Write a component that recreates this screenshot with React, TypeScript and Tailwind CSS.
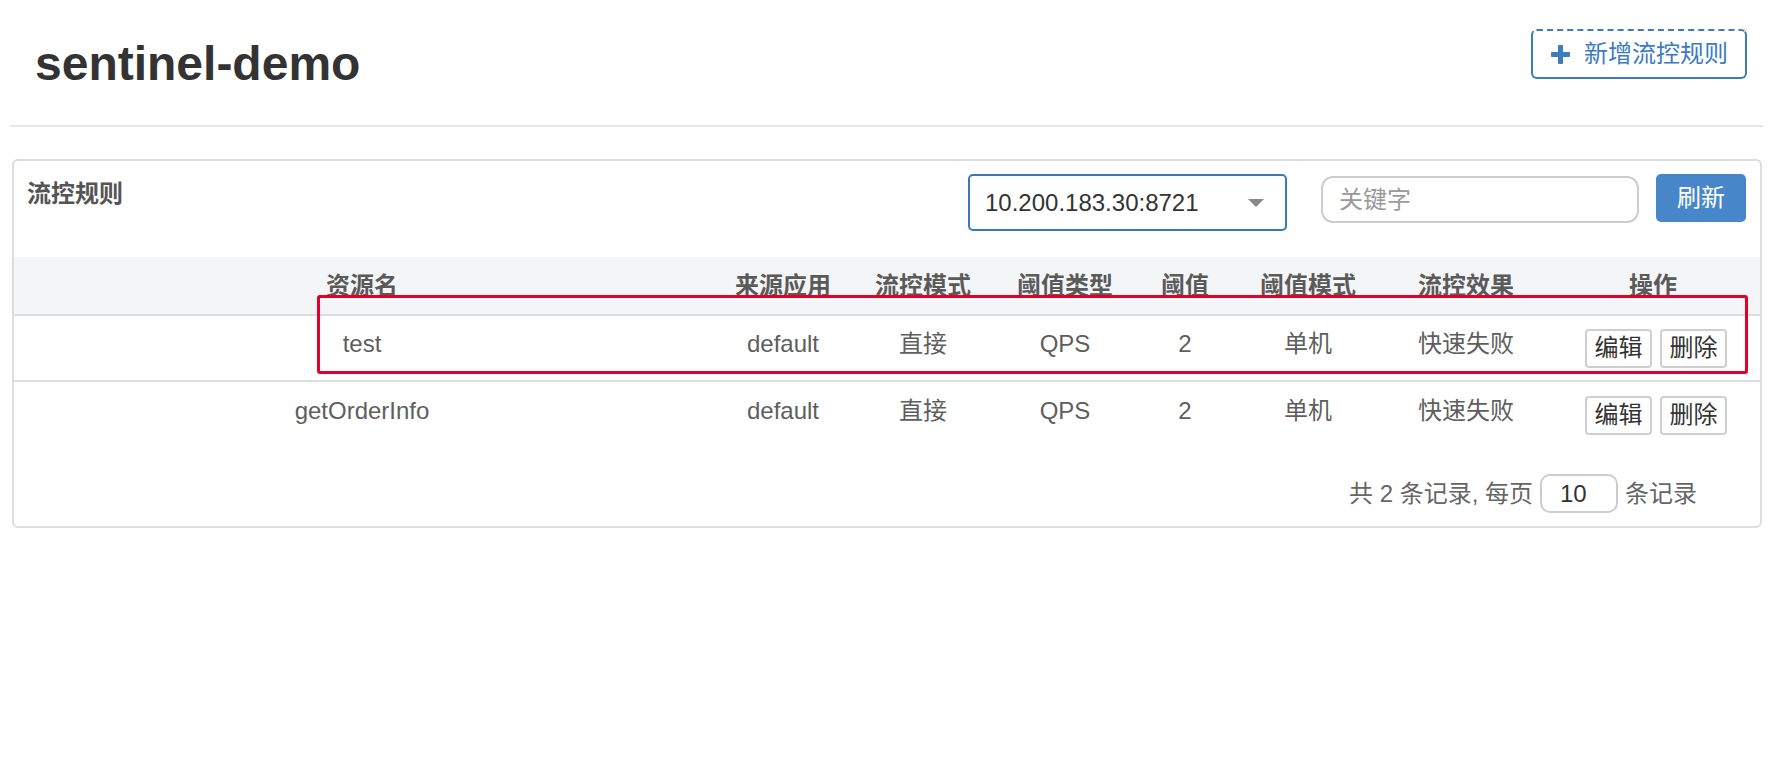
import React from "react";

const cols =
  "grid grid-cols-[696px_146px_134px_150px_90px_156px_160px_214px] items-center text-center";

interface Rule {
  resource: string;
  limitApp: string;
  strategy: string;
  grade: string;
  count: number;
  clusterMode: string;
  behavior: string;
}

const rules: Rule[] = [
  {
    resource: "test",
    limitApp: "default",
    strategy: "直接",
    grade: "QPS",
    count: 2,
    clusterMode: "单机",
    behavior: "快速失败",
  },
  {
    resource: "getOrderInfo",
    limitApp: "default",
    strategy: "直接",
    grade: "QPS",
    count: 2,
    clusterMode: "单机",
    behavior: "快速失败",
  },
];

const headers = ["资源名", "来源应用", "流控模式", "阈值类型", "阈值", "阈值模式", "流控效果", "操作"];

const PlusIcon = () => (
  <svg width="19" height="19" viewBox="0 0 19 19" fill="#3b7bbf">
    <rect x="7" y="0" width="5" height="19" rx="1" />
    <rect x="0" y="7" width="19" height="5" rx="1" />
  </svg>
);

const SmallButton: React.FC<{ children: React.ReactNode }> = ({ children }) => (
  <button className="h-[39px] w-[67px] rounded-[4px] border-2 border-[#cfcfcf] bg-white text-[24px] leading-none text-[#333]">
    {children}
  </button>
);

const RuleRow: React.FC<{ rule: Rule; last?: boolean }> = ({ rule, last }) => {
  const cells = [
    rule.resource,
    rule.limitApp,
    rule.strategy,
    rule.grade,
    String(rule.count),
    rule.clusterMode,
    rule.behavior,
  ];
  return (
    <div
      className={`${cols} h-[66px] text-[24px] text-[#5e5e5e] ${
        last ? "" : "border-b-2 border-[#dedede]"
      }`}
    >
      {cells.map((c, i) => (
        <div key={i} className="pb-[8px]">
          {c}
        </div>
      ))}
      <div className="flex justify-center gap-[8px] pl-[6px]">
        <SmallButton>编辑</SmallButton>
        <SmallButton>删除</SmallButton>
      </div>
    </div>
  );
};

export default function App() {
  return (
    <div className="relative min-h-[762px] bg-white pl-[10px] pr-[17px] font-['Liberation_Sans','Noto_Sans_CJK_SC',sans-serif]">
      {/* page header */}
      <div className="flex h-[125px] items-start justify-between">
        <h1 className="ml-[25px] mt-[36px] text-[48px] font-bold leading-[56px] text-[#333]">
          sentinel-demo
        </h1>
        <button className="mr-[16px] mt-[29px] flex h-[50px] w-[216px] items-center gap-[14px] rounded-[6px] border-2 border-[#3b7bbf] pl-[18px] text-[24px] leading-none text-[#3b7bbf] [border-top-style:dashed]">
          <PlusIcon />
          <span>新增流控规则</span>
        </button>
      </div>
      <div className="h-[2px] bg-[#e6e6e6]" />

      {/* rules card */}
      <div className="ml-[2px] mr-[1px] mt-[32px] rounded-[6px] border-2 border-[#dddddd]">
        <div className="flex h-[96px] items-start pr-[14px]">
          <div className="ml-[13px] mt-[21px] text-[24px] font-semibold leading-[24px] text-[#555]">
            流控规则
          </div>
          <div className="flex-1" />
          <div className="mt-[13px] flex h-[57px] w-[319px] items-center justify-between rounded-[5px] border-2 border-[#3b78b8] pl-[15px] pr-[21px] text-[24px] text-[#333]">
            <span>10.200.183.30:8721</span>
            <svg width="16" height="8" viewBox="0 0 16 8">
              <path d="M0 0 H16 L8 8 Z" fill="#888" />
            </svg>
          </div>
          <div className="ml-[34px] mt-[15px] flex h-[47px] w-[318px] items-center rounded-[12px] border-2 border-[#cccccc] pl-[16px] text-[24px] text-[#9a9a9a]">
            关键字
          </div>
          <button className="ml-[17px] mt-[13px] h-[48px] w-[90px] rounded-[5px] bg-[#4787c9] text-[24px] text-white">
            刷新
          </button>
        </div>

        <div className={`${cols} h-[59px] border-b-2 border-[#dedede] bg-[#f4f5f7] text-[24px] font-semibold text-[#5a5a5a]`}>
          {headers.map((h) => (
            <div key={h}>{h}</div>
          ))}
        </div>
        {rules.map((r, i) => (
          <RuleRow key={r.resource} rule={r} last={i === rules.length - 1} />
        ))}

        <div className="flex items-center justify-end pb-[13px] pr-[63px] pt-[26px] text-[24px] text-[#666]">
          <span>共 2 条记录, 每页</span>
          <div className="mx-[7px] flex h-[39px] w-[78px] items-center rounded-[10px] border-2 border-[#cccccc] pl-[18px] text-[#333]">
            10
          </div>
          <span>条记录</span>
        </div>
      </div>

      {/* annotation box drawn over the first row */}
      <div className="pointer-events-none absolute left-[317px] top-[295px] h-[79px] w-[1431px] rounded-[3px] border-[3px] border-[#e4002b]" />
    </div>
  );
}
